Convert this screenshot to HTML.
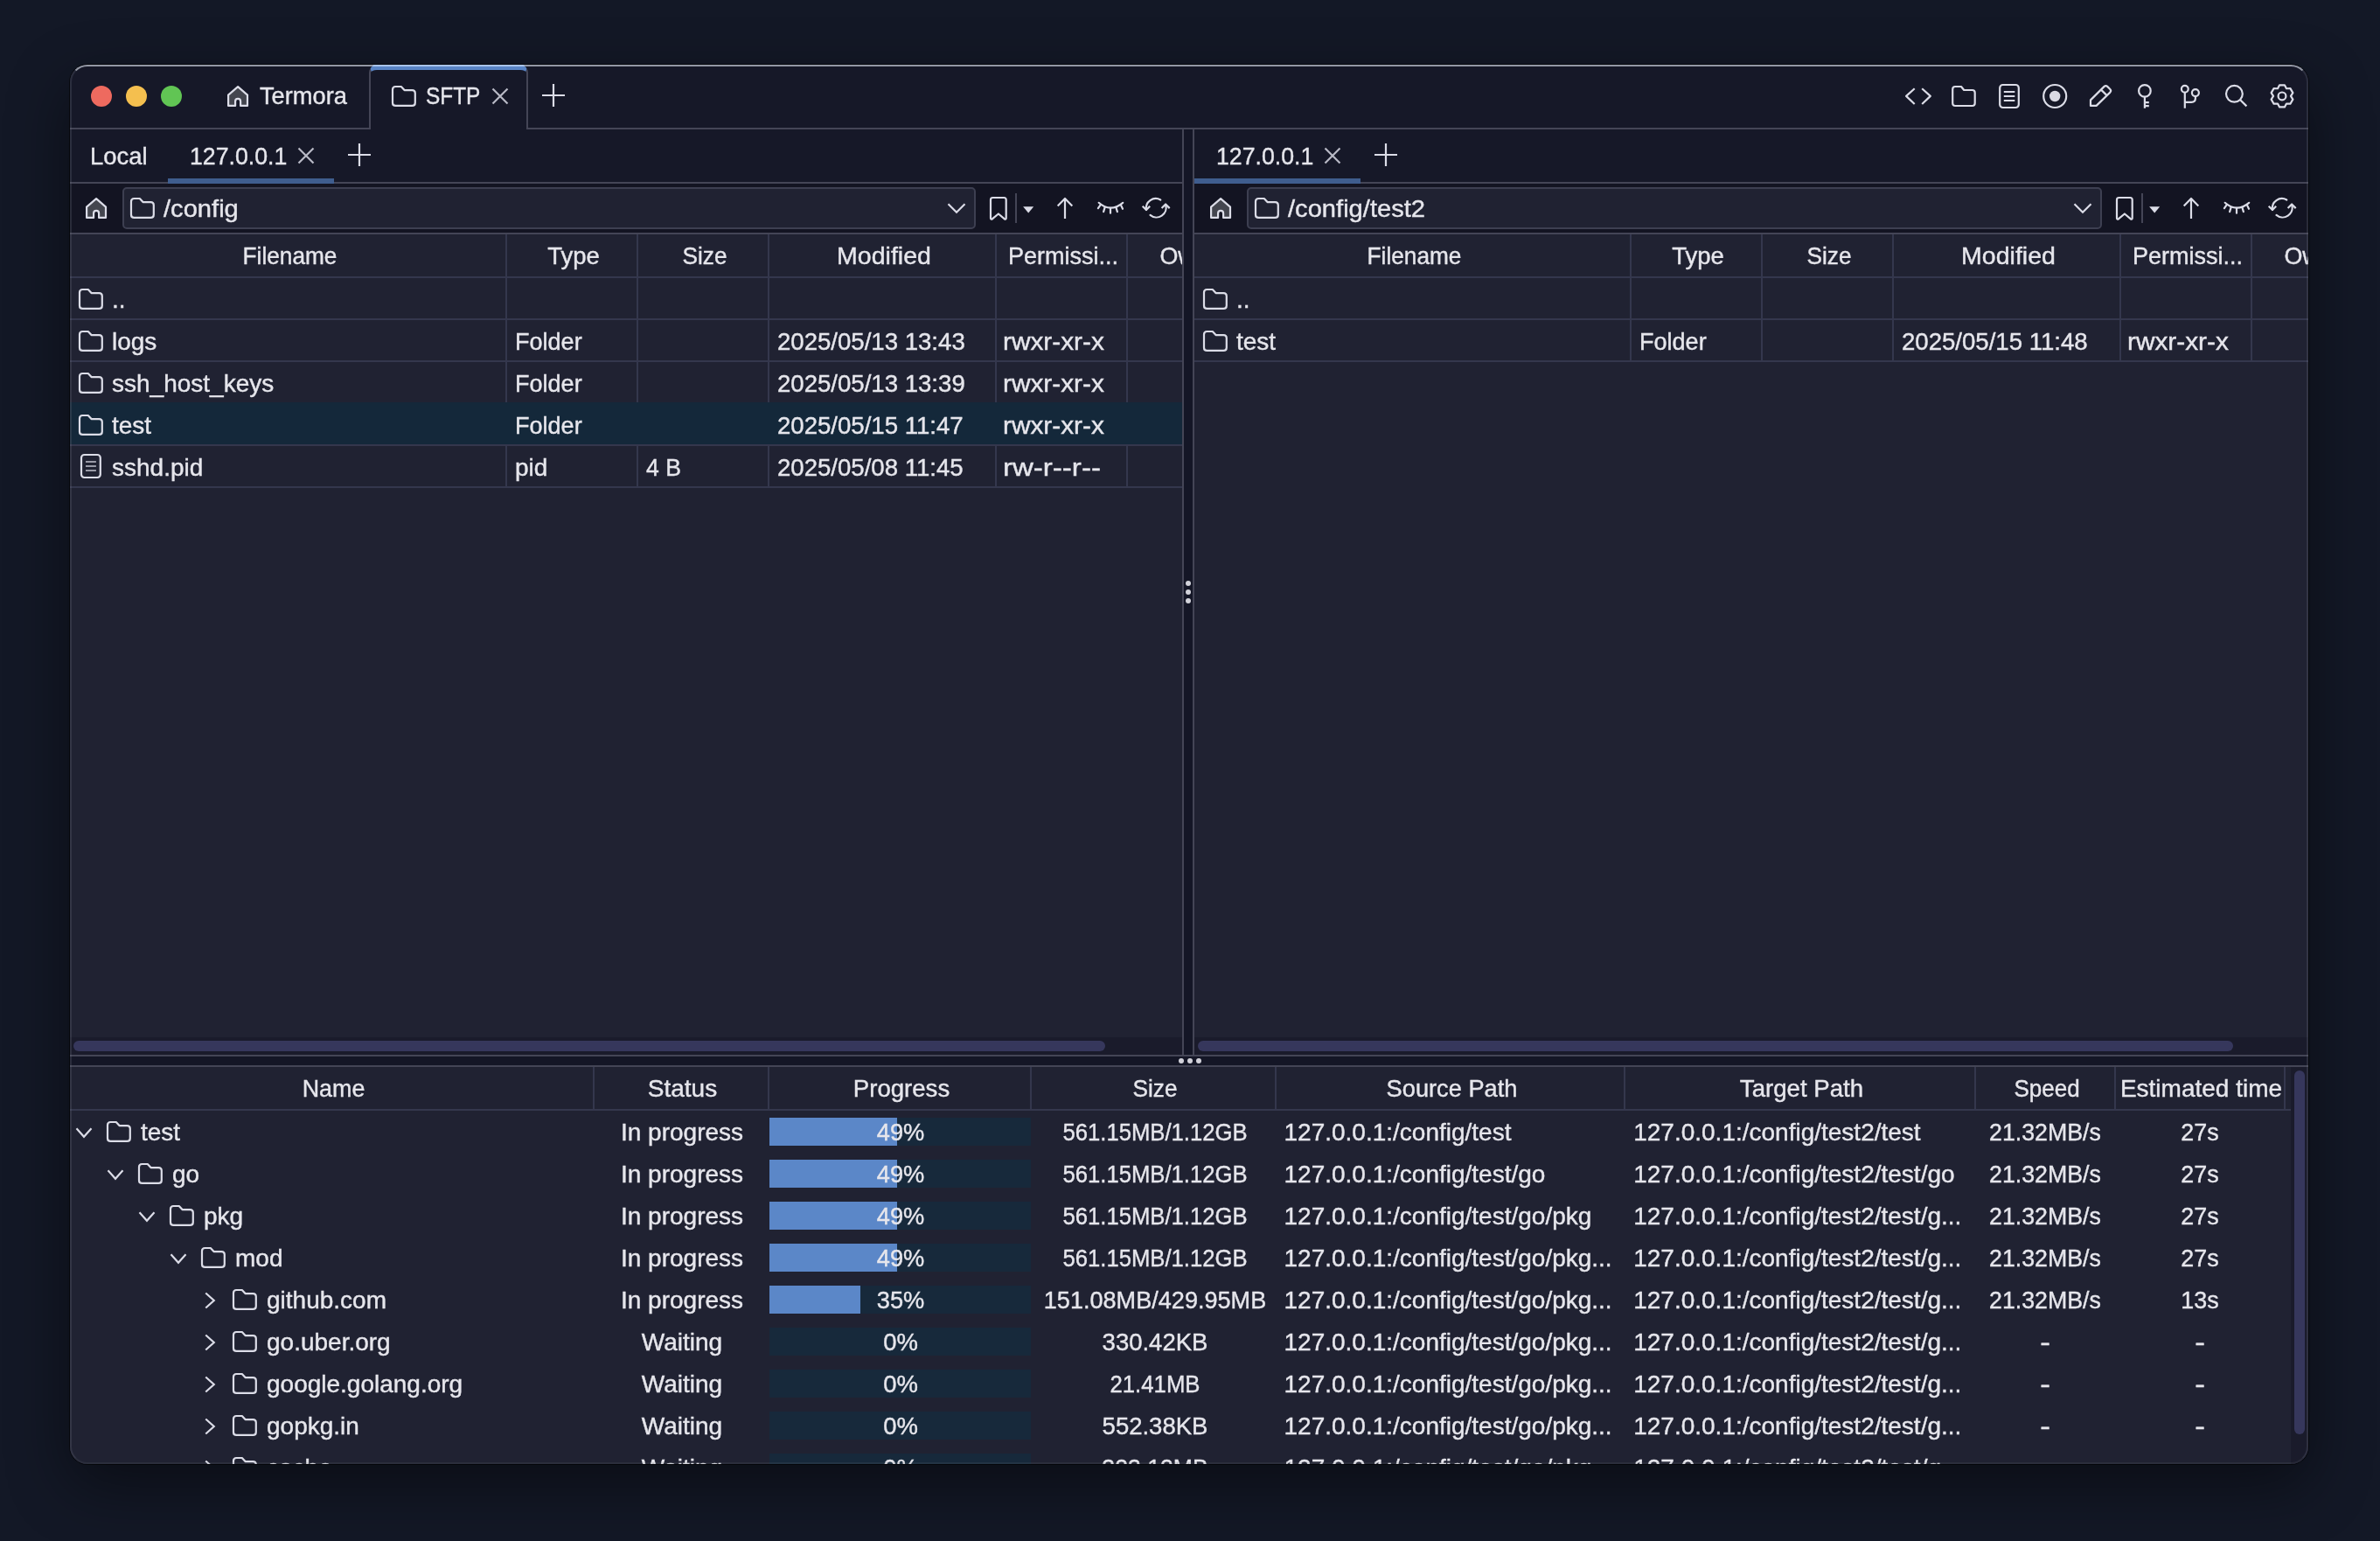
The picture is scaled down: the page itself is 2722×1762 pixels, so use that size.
<!DOCTYPE html><html><head><meta charset="utf-8"><style>
html,body{margin:0;padding:0;}
*{-webkit-font-smoothing:antialiased;}
div{-webkit-text-stroke:0.4px currentColor;}
body{width:2722px;height:1762px;overflow:hidden;background:#131826;font-family:"Liberation Sans", sans-serif;position:relative;}
</style></head><body>
<div style="position:absolute;left:80px;top:74px;width:2560px;height:1600px;border-radius:20px;background:#202232;overflow:hidden;box-shadow:0 0 0 1px rgba(0,0,0,0.6), 0 24px 70px rgba(0,0,0,0.45);">
</div>
<div style="position:absolute;left:80px;top:74px;width:2560px;height:1600px;border-radius:20px;overflow:hidden;will-change:transform;">
<div style="position:absolute;left:-80px;top:-74px;width:2722px;height:1762px;">
<div style="position:absolute;left:80px;top:74px;width:2560px;height:74px;background:#161828"></div>
<div style="position:absolute;left:80px;top:146px;width:2560px;height:2px;background:#444556"></div>
<div style="position:absolute;left:422px;top:74px;width:178px;height:68px;background:#161828;border-left:2px solid #444556;border-right:2px solid #444556;border-top:6px solid #5a85c6;border-radius:9px 9px 0 0;"></div>
<div style="position:absolute;left:104px;top:98px;width:24px;height:24px;border-radius:50%;background:#ee6a5f"></div>
<div style="position:absolute;left:144px;top:98px;width:24px;height:24px;border-radius:50%;background:#f4bf4f"></div>
<div style="position:absolute;left:184px;top:98px;width:24px;height:24px;border-radius:50%;background:#61c554"></div>
<svg style="position:absolute;left:252px;top:90px;" width="40" height="40" viewBox="0 0 40 40" fill="none" stroke="#dcdde8" stroke-width="2.2" stroke-linecap="round" stroke-linejoin="round"><path d="M9.1 30.9 V18.6 L20.1 9.1 L31 18.6 V30.9 H23.1 V25.9 A3 3 0 0 0 17.1 25.9 V30.9 Z" fill="#44464f"/></svg>
<div style="position:absolute;left:297px;top:90.30px;height:40px;line-height:40px;font-size:28px;color:#e6e6ec;white-space:nowrap;transform:scaleX(0.973);transform-origin:0 0;">Termora</div>
<svg style="position:absolute;left:446px;top:96px;" width="32" height="28" viewBox="0 0 32 28" fill="none" stroke="#dcdde8" stroke-width="2.2" stroke-linecap="round" stroke-linejoin="round"><path d="M3 6.5 Q3 3 6.5 3 H12.8 L16.5 7.1 H25.3 Q28.8 7.1 28.8 10.6 V21.4 Q28.8 24.9 25.3 24.9 H6.5 Q3 24.9 3 21.4 Z" stroke-width="2.2"/></svg>
<div style="position:absolute;left:487px;top:90.30px;height:40px;line-height:40px;font-size:28px;color:#e6e6ec;white-space:nowrap;transform:scaleX(0.871);transform-origin:0 0;">SFTP</div>
<svg style="position:absolute;left:560px;top:98px;" width="24" height="24" viewBox="0 0 24 24" fill="none" stroke="#dcdde8" stroke-width="2.2" stroke-linecap="round" stroke-linejoin="round"><path d="M3.5 3.5 L20.5 20.5 M20.5 3.5 L3.5 20.5" stroke="#b9bac6" stroke-width="2.2" stroke-linecap="butt"/></svg>
<svg style="position:absolute;left:618px;top:94px;" width="30" height="30" viewBox="0 0 30 30" fill="none" stroke="#dcdde8" stroke-width="2.2" stroke-linecap="round" stroke-linejoin="round"><path d="M2 15 H28 M15 2 V28" stroke-width="2.2" stroke-linecap="butt"/></svg>
<svg style="position:absolute;left:2170px;top:90px;" width="50" height="40" viewBox="0 0 50 40" fill="none" stroke="#dcdde8" stroke-width="2.2" stroke-linecap="round" stroke-linejoin="round"><path d="M19.7 11.3 L10.1 19.9 L19.7 29 M28.2 11.3 L37.8 19.9 L28.2 29" stroke-linecap="butt"/></svg>
<svg style="position:absolute;left:2220px;top:90px;" width="50" height="40" viewBox="0 0 50 40" fill="none" stroke="#dcdde8" stroke-width="2.2" stroke-linecap="round" stroke-linejoin="round"><path d="M13.2 12 Q13.2 9 16.2 9 H23 L26.2 13 H35.7 Q38.7 13 38.7 16 V28 Q38.7 31 35.7 31 H16.2 Q13.2 31 13.2 28 Z"/></svg>
<svg style="position:absolute;left:2275px;top:90px;" width="45" height="40" viewBox="0 0 45 40" fill="none" stroke="#dcdde8" stroke-width="2.2" stroke-linecap="round" stroke-linejoin="round"><rect x="12.2" y="7" width="21.6" height="26" rx="3.5"/><path d="M16.8 15 H29.3 M16.8 20 H29.3 M16.8 25 H29.3" stroke-linecap="butt"/></svg>
<svg style="position:absolute;left:2320px;top:90px;" width="60" height="40" viewBox="0 0 60 40" fill="none" stroke="#dcdde8" stroke-width="2.2" stroke-linecap="round" stroke-linejoin="round"><circle cx="30.2" cy="20" r="13"/><circle cx="30.2" cy="20" r="6.2" fill="#dadae4" stroke="none"/></svg>
<svg style="position:absolute;left:2380px;top:90px;" width="50" height="40" viewBox="0 0 50 40" fill="none" stroke="#dcdde8" stroke-width="2.2" stroke-linecap="round" stroke-linejoin="round"><path d="M11 30.9 V24.4 L26.6 8.9 Q28.4 7.2 30.2 8.9 L33.3 12 Q35 13.8 33.3 15.6 L17.6 30.9 Z M23 12.6 L28.9 18.4" stroke-linecap="butt"/></svg>
<svg style="position:absolute;left:2430px;top:90px;" width="45" height="40" viewBox="0 0 45 40" fill="none" stroke="#dcdde8" stroke-width="2.2" stroke-linecap="round" stroke-linejoin="round"><circle cx="22.9" cy="13.9" r="6.8"/><path d="M22.9 20.7 V33.7 M22.9 27.1 H27.8 M22.9 31.2 H27.8" stroke-linecap="butt"/></svg>
<svg style="position:absolute;left:2480px;top:90px;" width="45" height="40" viewBox="0 0 45 40" fill="none" stroke="#dcdde8" stroke-width="2.2" stroke-linecap="round" stroke-linejoin="round"><circle cx="18.8" cy="11.7" r="3.9"/><circle cx="30.9" cy="16.1" r="4"/><path d="M18.8 15.6 V33.7 M18.8 26.8 H26.3 Q30.9 26.8 30.9 22.2 V20.1" stroke-linecap="butt"/></svg>
<svg style="position:absolute;left:2530px;top:90px;" width="50" height="40" viewBox="0 0 50 40" fill="none" stroke="#dcdde8" stroke-width="2.2" stroke-linecap="round" stroke-linejoin="round"><circle cx="25.4" cy="17.3" r="9.4"/><path d="M32.2 24.2 L39.4 31.4" stroke-linecap="butt"/></svg>
<svg style="position:absolute;left:2590px;top:90px;" width="40" height="40" viewBox="0 0 40 40" fill="none" stroke="#dcdde8" stroke-width="2.2" stroke-linecap="round" stroke-linejoin="round"><path d="M25.00 11.24 L22.90 7.33 L17.10 7.33 L15.00 11.24 L10.57 11.10 L7.66 16.13 L10.00 19.90 L7.66 23.67 L10.57 28.70 L15.00 28.56 L17.10 32.47 L22.90 32.47 L25.00 28.56 L29.43 28.70 L32.34 23.67 L30.00 19.90 L32.34 16.13 L29.43 11.10 Z"/><circle cx="20" cy="19.9" r="4.4"/></svg>
<div style="position:absolute;left:80px;top:148px;width:1272px;height:1058px;overflow:hidden"><div style="position:absolute;left:-80px;top:-148px;width:2722px;height:1762px">
<div style="position:absolute;left:80px;top:148px;width:1272px;height:60px;background:#161828"></div>
<div style="position:absolute;left:80px;top:208px;width:1272px;height:2px;background:#444556"></div>
<div style="position:absolute;left:192px;top:204px;width:190px;height:6px;background:#3f5d8e"></div>
<div style="position:absolute;left:103px;top:158.80px;height:40px;line-height:40px;font-size:28px;color:#e6e6ec;white-space:nowrap;transform:scaleX(0.98);transform-origin:0 0;">Local</div>
<div style="position:absolute;left:217px;top:158.80px;height:40px;line-height:40px;font-size:28px;color:#e6e6ec;white-space:nowrap;transform:scaleX(0.953);transform-origin:0 0;">127.0.0.1</div>
<svg style="position:absolute;left:338px;top:166px;" width="24" height="24" viewBox="0 0 24 24" fill="none" stroke="#dcdde8" stroke-width="2.2" stroke-linecap="round" stroke-linejoin="round"><path d="M3.5 3.5 L20.5 20.5 M20.5 3.5 L3.5 20.5" stroke="#b9bac6" stroke-width="2.2" stroke-linecap="butt"/></svg>
<svg style="position:absolute;left:396px;top:162px;" width="30" height="30" viewBox="0 0 30 30" fill="none" stroke="#dcdde8" stroke-width="2.2" stroke-linecap="round" stroke-linejoin="round"><path d="M2 15 H28 M15 2 V28" stroke-width="2.2" stroke-linecap="butt"/></svg>
<div style="position:absolute;left:80px;top:210px;width:1272px;height:56px;background:#131422"></div>
<div style="position:absolute;left:80px;top:266px;width:1272px;height:2px;background:#444556"></div>
<svg style="position:absolute;left:89.5px;top:218px;" width="40" height="40" viewBox="0 0 40 40" fill="none" stroke="#dcdde8" stroke-width="2.2" stroke-linecap="round" stroke-linejoin="round"><path d="M9.1 30.9 V18.6 L20.1 9.1 L31 18.6 V30.9 H23.1 V25.9 A3 3 0 0 0 17.1 25.9 V30.9 Z" fill="#44464f"/></svg>
<div style="position:absolute;left:140px;top:214px;width:972px;height:44px;border:2px solid #3d3f51;border-radius:5px;background:#202232"></div>
<svg style="position:absolute;left:146.5px;top:224px;" width="32" height="28" viewBox="0 0 32 28" fill="none" stroke="#dcdde8" stroke-width="2.2" stroke-linecap="round" stroke-linejoin="round"><path d="M3 6.5 Q3 3 6.5 3 H12.8 L16.5 7.1 H25.3 Q28.8 7.1 28.8 10.6 V21.4 Q28.8 24.9 25.3 24.9 H6.5 Q3 24.9 3 21.4 Z" stroke-width="2.2"/></svg>
<div style="position:absolute;left:186.5px;top:218.60px;height:40px;line-height:40px;font-size:28px;color:#e6e6ec;white-space:nowrap;transform:scaleX(1.04);transform-origin:0 0;">/config</div>
<svg style="position:absolute;left:1082px;top:226px;" width="24" height="24" viewBox="0 0 24 24" fill="none" stroke="#dcdde8" stroke-width="2.2" stroke-linecap="round" stroke-linejoin="round"><path d="M2.5 7.25 L12 16.75 L21.5 7.25" stroke-width="2.2" stroke-linecap="butt" stroke-linejoin="miter"/></svg>
<svg style="position:absolute;left:1128px;top:222px;" width="28" height="32" viewBox="0 0 28 32" fill="none" stroke="#dcdde8" stroke-width="2.2" stroke-linecap="round" stroke-linejoin="round"><path d="M5 6.5 Q5 4 7.5 4 H20.2 Q22.7 4 22.7 6.5 V27.2 Q22.7 29.5 20.6 28.2 L13.9 22.5 L7.1 28.2 Q5 29.5 5 27.2 Z"/></svg>
<div style="position:absolute;left:1161px;top:221px;width:2px;height:34px;background:#444556"></div>
<svg style="position:absolute;left:1168px;top:234px;" width="16" height="12" viewBox="0 0 16 12" fill="none" stroke="#dcdde8" stroke-width="2.2" stroke-linecap="round" stroke-linejoin="round"><path d="M2.1 2.2 H14.2 L8.2 9.5 Z" fill="#dcdde8" stroke="none"/></svg>
<svg style="position:absolute;left:1205px;top:224px;" width="26" height="30" viewBox="0 0 26 30" fill="none" stroke="#dcdde8" stroke-width="2.2" stroke-linecap="round" stroke-linejoin="round"><path d="M13 3 V25.9 M4.7 11.5 L13 3 L21.3 11.5" stroke-linecap="butt"/></svg>
<svg style="position:absolute;left:1248px;top:222px;" width="44" height="28" viewBox="0 0 44 28" fill="none" stroke="#dcdde8" stroke-width="2.2" stroke-linecap="round" stroke-linejoin="round"><path d="M8.7 9.8 Q22 21.6 36.2 9.8" /><path d="M10.6 12.4 L7.9 16.2 M15.7 14.9 L14.1 20.1 M22 15.8 V21.7 M28.3 14.9 L29.9 20.1 M33.9 12.4 L36 16.8"/></svg>
<svg style="position:absolute;left:1302px;top:221px;" width="40" height="32" viewBox="0 0 40 32" fill="none" stroke="#dcdde8" stroke-width="2.2" stroke-linecap="round" stroke-linejoin="round"><path d="M25.3 7.5 A11 11 0 0 0 9 19" /><path d="M4.7 14.8 L9 19 L13.2 14.8" stroke-linecap="butt"/><path d="M13.5 24.9 A11 11 0 0 0 31.1 13.2"/><path d="M26.6 17.1 L31.1 12.5 L35.7 17.1" stroke-linecap="butt"/></svg>
<div style="position:absolute;left:86.50px;top:273.30px;width:489px;height:40px;line-height:40px;font-size:28px;color:#e6e6ec;white-space:nowrap;text-align:center;overflow:hidden;transform:scaleX(0.937);transform-origin:50% 0;">Filename</div>
<div style="position:absolute;left:585.50px;top:273.30px;width:140px;height:40px;line-height:40px;font-size:28px;color:#e6e6ec;white-space:nowrap;text-align:center;overflow:hidden;transform:scaleX(0.983);transform-origin:50% 0;">Type</div>
<div style="position:absolute;left:735.50px;top:273.30px;width:140px;height:40px;line-height:40px;font-size:28px;color:#e6e6ec;white-space:nowrap;text-align:center;overflow:hidden;transform:scaleX(0.936);transform-origin:50% 0;">Size</div>
<div style="position:absolute;left:885.50px;top:273.30px;width:250px;height:40px;line-height:40px;font-size:28px;color:#e6e6ec;white-space:nowrap;text-align:center;overflow:hidden;transform:scaleX(1.019);transform-origin:50% 0;">Modified</div>
<div style="position:absolute;left:1145.50px;top:273.30px;width:140px;height:40px;line-height:40px;font-size:28px;color:#e6e6ec;white-space:nowrap;text-align:center;overflow:hidden;transform:scaleX(0.965);transform-origin:50% 0;">Permissi...</div>
<div style="position:absolute;left:1295.50px;top:273.30px;width:140px;height:40px;line-height:40px;font-size:28px;color:#e6e6ec;white-space:nowrap;text-align:center;overflow:hidden;transform:scaleX(0.96);transform-origin:50% 0;">Owner</div>
<div style="position:absolute;left:80px;top:316px;width:1272px;height:2px;background:#34374d"></div>
<div style="position:absolute;left:80px;top:364px;width:1272px;height:2px;background:#34374d"></div>
<div style="position:absolute;left:80px;top:412px;width:1272px;height:2px;background:#34374d"></div>
<div style="position:absolute;left:80px;top:460px;width:1272px;height:2px;background:#34374d"></div>
<div style="position:absolute;left:80px;top:460px;width:1272px;height:50px;background:#14283a"></div>
<div style="position:absolute;left:80px;top:508px;width:1272px;height:2px;background:#34374d"></div>
<div style="position:absolute;left:80px;top:556px;width:1272px;height:2px;background:#34374d"></div>
<div style="position:absolute;left:578px;top:268px;width:2px;height:48px;background:#34374d"></div>
<div style="position:absolute;left:578px;top:318px;width:2px;height:46px;background:#34374d"></div>
<div style="position:absolute;left:578px;top:366px;width:2px;height:46px;background:#34374d"></div>
<div style="position:absolute;left:578px;top:414px;width:2px;height:46px;background:#34374d"></div>
<div style="position:absolute;left:578px;top:510px;width:2px;height:46px;background:#34374d"></div>
<div style="position:absolute;left:728px;top:268px;width:2px;height:48px;background:#34374d"></div>
<div style="position:absolute;left:728px;top:318px;width:2px;height:46px;background:#34374d"></div>
<div style="position:absolute;left:728px;top:366px;width:2px;height:46px;background:#34374d"></div>
<div style="position:absolute;left:728px;top:414px;width:2px;height:46px;background:#34374d"></div>
<div style="position:absolute;left:728px;top:510px;width:2px;height:46px;background:#34374d"></div>
<div style="position:absolute;left:878px;top:268px;width:2px;height:48px;background:#34374d"></div>
<div style="position:absolute;left:878px;top:318px;width:2px;height:46px;background:#34374d"></div>
<div style="position:absolute;left:878px;top:366px;width:2px;height:46px;background:#34374d"></div>
<div style="position:absolute;left:878px;top:414px;width:2px;height:46px;background:#34374d"></div>
<div style="position:absolute;left:878px;top:510px;width:2px;height:46px;background:#34374d"></div>
<div style="position:absolute;left:1138px;top:268px;width:2px;height:48px;background:#34374d"></div>
<div style="position:absolute;left:1138px;top:318px;width:2px;height:46px;background:#34374d"></div>
<div style="position:absolute;left:1138px;top:366px;width:2px;height:46px;background:#34374d"></div>
<div style="position:absolute;left:1138px;top:414px;width:2px;height:46px;background:#34374d"></div>
<div style="position:absolute;left:1138px;top:510px;width:2px;height:46px;background:#34374d"></div>
<div style="position:absolute;left:1288px;top:268px;width:2px;height:48px;background:#34374d"></div>
<div style="position:absolute;left:1288px;top:318px;width:2px;height:46px;background:#34374d"></div>
<div style="position:absolute;left:1288px;top:366px;width:2px;height:46px;background:#34374d"></div>
<div style="position:absolute;left:1288px;top:414px;width:2px;height:46px;background:#34374d"></div>
<div style="position:absolute;left:1288px;top:510px;width:2px;height:46px;background:#34374d"></div>
<svg style="position:absolute;left:88px;top:327.5px;" width="32" height="28" viewBox="0 0 32 28" fill="none" stroke="#dcdde8" stroke-width="2.2" stroke-linecap="round" stroke-linejoin="round"><path d="M3 6.5 Q3 3 6.5 3 H12.8 L16.5 7.1 H25.3 Q28.8 7.1 28.8 10.6 V21.4 Q28.8 24.9 25.3 24.9 H6.5 Q3 24.9 3 21.4 Z" stroke-width="2.2"/></svg>
<div style="position:absolute;left:128px;top:322.50px;height:40px;line-height:40px;font-size:28px;color:#e6e6ec;white-space:nowrap;">..</div>
<div style="position:absolute;left:589px;top:322.50px;height:40px;line-height:40px;font-size:28px;color:#e6e6ec;white-space:nowrap;"></div>
<div style="position:absolute;left:739px;top:322.50px;height:40px;line-height:40px;font-size:28px;color:#e6e6ec;white-space:nowrap;"></div>
<div style="position:absolute;left:889px;top:322.50px;height:40px;line-height:40px;font-size:28px;color:#e6e6ec;white-space:nowrap;"></div>
<div style="position:absolute;left:1147px;top:322.50px;height:40px;line-height:40px;font-size:28px;color:#e6e6ec;white-space:nowrap;"></div>
<svg style="position:absolute;left:88px;top:375.5px;" width="32" height="28" viewBox="0 0 32 28" fill="none" stroke="#dcdde8" stroke-width="2.2" stroke-linecap="round" stroke-linejoin="round"><path d="M3 6.5 Q3 3 6.5 3 H12.8 L16.5 7.1 H25.3 Q28.8 7.1 28.8 10.6 V21.4 Q28.8 24.9 25.3 24.9 H6.5 Q3 24.9 3 21.4 Z" stroke-width="2.2"/></svg>
<div style="position:absolute;left:128px;top:370.50px;height:40px;line-height:40px;font-size:28px;color:#e6e6ec;white-space:nowrap;">logs</div>
<div style="position:absolute;left:589px;top:370.50px;height:40px;line-height:40px;font-size:28px;color:#e6e6ec;white-space:nowrap;transform:scaleX(0.966);transform-origin:0 0;">Folder</div>
<div style="position:absolute;left:739px;top:370.50px;height:40px;line-height:40px;font-size:28px;color:#e6e6ec;white-space:nowrap;"></div>
<div style="position:absolute;left:889px;top:370.50px;height:40px;line-height:40px;font-size:28px;color:#e6e6ec;white-space:nowrap;transform:scaleX(0.985);transform-origin:0 0;">2025/05/13 13:43</div>
<div style="position:absolute;left:1147px;top:370.50px;height:40px;line-height:40px;font-size:28px;color:#e6e6ec;white-space:nowrap;transform:scaleX(1.064);transform-origin:0 0;">rwxr-xr-x</div>
<svg style="position:absolute;left:88px;top:423.5px;" width="32" height="28" viewBox="0 0 32 28" fill="none" stroke="#dcdde8" stroke-width="2.2" stroke-linecap="round" stroke-linejoin="round"><path d="M3 6.5 Q3 3 6.5 3 H12.8 L16.5 7.1 H25.3 Q28.8 7.1 28.8 10.6 V21.4 Q28.8 24.9 25.3 24.9 H6.5 Q3 24.9 3 21.4 Z" stroke-width="2.2"/></svg>
<div style="position:absolute;left:128px;top:418.50px;height:40px;line-height:40px;font-size:28px;color:#e6e6ec;white-space:nowrap;">ssh_host_keys</div>
<div style="position:absolute;left:589px;top:418.50px;height:40px;line-height:40px;font-size:28px;color:#e6e6ec;white-space:nowrap;transform:scaleX(0.966);transform-origin:0 0;">Folder</div>
<div style="position:absolute;left:739px;top:418.50px;height:40px;line-height:40px;font-size:28px;color:#e6e6ec;white-space:nowrap;"></div>
<div style="position:absolute;left:889px;top:418.50px;height:40px;line-height:40px;font-size:28px;color:#e6e6ec;white-space:nowrap;transform:scaleX(0.985);transform-origin:0 0;">2025/05/13 13:39</div>
<div style="position:absolute;left:1147px;top:418.50px;height:40px;line-height:40px;font-size:28px;color:#e6e6ec;white-space:nowrap;transform:scaleX(1.064);transform-origin:0 0;">rwxr-xr-x</div>
<svg style="position:absolute;left:88px;top:471.5px;" width="32" height="28" viewBox="0 0 32 28" fill="none" stroke="#dcdde8" stroke-width="2.2" stroke-linecap="round" stroke-linejoin="round"><path d="M3 6.5 Q3 3 6.5 3 H12.8 L16.5 7.1 H25.3 Q28.8 7.1 28.8 10.6 V21.4 Q28.8 24.9 25.3 24.9 H6.5 Q3 24.9 3 21.4 Z" stroke-width="2.2"/></svg>
<div style="position:absolute;left:128px;top:466.50px;height:40px;line-height:40px;font-size:28px;color:#e6e6ec;white-space:nowrap;">test</div>
<div style="position:absolute;left:589px;top:466.50px;height:40px;line-height:40px;font-size:28px;color:#e6e6ec;white-space:nowrap;transform:scaleX(0.966);transform-origin:0 0;">Folder</div>
<div style="position:absolute;left:739px;top:466.50px;height:40px;line-height:40px;font-size:28px;color:#e6e6ec;white-space:nowrap;"></div>
<div style="position:absolute;left:889px;top:466.50px;height:40px;line-height:40px;font-size:28px;color:#e6e6ec;white-space:nowrap;transform:scaleX(0.985);transform-origin:0 0;">2025/05/15 11:47</div>
<div style="position:absolute;left:1147px;top:466.50px;height:40px;line-height:40px;font-size:28px;color:#e6e6ec;white-space:nowrap;transform:scaleX(1.064);transform-origin:0 0;">rwxr-xr-x</div>
<svg style="position:absolute;left:91.1px;top:518px;" width="26" height="30" viewBox="0 0 26 30" fill="none" stroke="#dcdde8" stroke-width="2.2" stroke-linecap="round" stroke-linejoin="round"><rect x="2" y="2" width="21.8" height="26" rx="3.5"/><path d="M7 10 H18.9 M7 15 H18.9 M7 20 H18.9" stroke="#9a9ba8" stroke-linecap="butt"/></svg>
<div style="position:absolute;left:128px;top:514.50px;height:40px;line-height:40px;font-size:28px;color:#e6e6ec;white-space:nowrap;">sshd.pid</div>
<div style="position:absolute;left:589px;top:514.50px;height:40px;line-height:40px;font-size:28px;color:#e6e6ec;white-space:nowrap;">pid</div>
<div style="position:absolute;left:739px;top:514.50px;height:40px;line-height:40px;font-size:28px;color:#e6e6ec;white-space:nowrap;transform:scaleX(0.95);transform-origin:0 0;">4 B</div>
<div style="position:absolute;left:889px;top:514.50px;height:40px;line-height:40px;font-size:28px;color:#e6e6ec;white-space:nowrap;transform:scaleX(0.985);transform-origin:0 0;">2025/05/08 11:45</div>
<div style="position:absolute;left:1147px;top:514.50px;height:40px;line-height:40px;font-size:28px;color:#e6e6ec;white-space:nowrap;transform:scaleX(1.18);transform-origin:0 0;">rw-r--r--</div>
<div style="position:absolute;left:80px;top:1186px;width:1272px;height:20px;background:#1a1b2b"></div>
<div style="position:absolute;left:84px;top:1190px;width:1180px;height:12px;border-radius:6px;background:#36375c"></div>
</div></div>
<div style="position:absolute;left:1365px;top:148px;width:1275px;height:1058px;overflow:hidden"><div style="position:absolute;left:-1365px;top:-148px;width:2722px;height:1762px">
<div style="position:absolute;left:1365px;top:148px;width:1275px;height:60px;background:#161828"></div>
<div style="position:absolute;left:1365px;top:208px;width:1275px;height:2px;background:#444556"></div>
<div style="position:absolute;left:1366px;top:204px;width:190px;height:6px;background:#3f5d8e"></div>
<div style="position:absolute;left:1391px;top:158.80px;height:40px;line-height:40px;font-size:28px;color:#e6e6ec;white-space:nowrap;transform:scaleX(0.953);transform-origin:0 0;">127.0.0.1</div>
<svg style="position:absolute;left:1512px;top:166px;" width="24" height="24" viewBox="0 0 24 24" fill="none" stroke="#dcdde8" stroke-width="2.2" stroke-linecap="round" stroke-linejoin="round"><path d="M3.5 3.5 L20.5 20.5 M20.5 3.5 L3.5 20.5" stroke="#b9bac6" stroke-width="2.2" stroke-linecap="butt"/></svg>
<svg style="position:absolute;left:1570px;top:162px;" width="30" height="30" viewBox="0 0 30 30" fill="none" stroke="#dcdde8" stroke-width="2.2" stroke-linecap="round" stroke-linejoin="round"><path d="M2 15 H28 M15 2 V28" stroke-width="2.2" stroke-linecap="butt"/></svg>
<div style="position:absolute;left:1365px;top:210px;width:1275px;height:56px;background:#131422"></div>
<div style="position:absolute;left:1365px;top:266px;width:1275px;height:2px;background:#444556"></div>
<svg style="position:absolute;left:1375.5px;top:218px;" width="40" height="40" viewBox="0 0 40 40" fill="none" stroke="#dcdde8" stroke-width="2.2" stroke-linecap="round" stroke-linejoin="round"><path d="M9.1 30.9 V18.6 L20.1 9.1 L31 18.6 V30.9 H23.1 V25.9 A3 3 0 0 0 17.1 25.9 V30.9 Z" fill="#44464f"/></svg>
<div style="position:absolute;left:1426px;top:214px;width:974px;height:44px;border:2px solid #3d3f51;border-radius:5px;background:#202232"></div>
<svg style="position:absolute;left:1432.5px;top:224px;" width="32" height="28" viewBox="0 0 32 28" fill="none" stroke="#dcdde8" stroke-width="2.2" stroke-linecap="round" stroke-linejoin="round"><path d="M3 6.5 Q3 3 6.5 3 H12.8 L16.5 7.1 H25.3 Q28.8 7.1 28.8 10.6 V21.4 Q28.8 24.9 25.3 24.9 H6.5 Q3 24.9 3 21.4 Z" stroke-width="2.2"/></svg>
<div style="position:absolute;left:1472.5px;top:218.60px;height:40px;line-height:40px;font-size:28px;color:#e6e6ec;white-space:nowrap;transform:scaleX(1.04);transform-origin:0 0;">/config/test2</div>
<svg style="position:absolute;left:2370px;top:226px;" width="24" height="24" viewBox="0 0 24 24" fill="none" stroke="#dcdde8" stroke-width="2.2" stroke-linecap="round" stroke-linejoin="round"><path d="M2.5 7.25 L12 16.75 L21.5 7.25" stroke-width="2.2" stroke-linecap="butt" stroke-linejoin="miter"/></svg>
<svg style="position:absolute;left:2416px;top:222px;" width="28" height="32" viewBox="0 0 28 32" fill="none" stroke="#dcdde8" stroke-width="2.2" stroke-linecap="round" stroke-linejoin="round"><path d="M5 6.5 Q5 4 7.5 4 H20.2 Q22.7 4 22.7 6.5 V27.2 Q22.7 29.5 20.6 28.2 L13.9 22.5 L7.1 28.2 Q5 29.5 5 27.2 Z"/></svg>
<div style="position:absolute;left:2449px;top:221px;width:2px;height:34px;background:#444556"></div>
<svg style="position:absolute;left:2456px;top:234px;" width="16" height="12" viewBox="0 0 16 12" fill="none" stroke="#dcdde8" stroke-width="2.2" stroke-linecap="round" stroke-linejoin="round"><path d="M2.1 2.2 H14.2 L8.2 9.5 Z" fill="#dcdde8" stroke="none"/></svg>
<svg style="position:absolute;left:2493px;top:224px;" width="26" height="30" viewBox="0 0 26 30" fill="none" stroke="#dcdde8" stroke-width="2.2" stroke-linecap="round" stroke-linejoin="round"><path d="M13 3 V25.9 M4.7 11.5 L13 3 L21.3 11.5" stroke-linecap="butt"/></svg>
<svg style="position:absolute;left:2536px;top:222px;" width="44" height="28" viewBox="0 0 44 28" fill="none" stroke="#dcdde8" stroke-width="2.2" stroke-linecap="round" stroke-linejoin="round"><path d="M8.7 9.8 Q22 21.6 36.2 9.8" /><path d="M10.6 12.4 L7.9 16.2 M15.7 14.9 L14.1 20.1 M22 15.8 V21.7 M28.3 14.9 L29.9 20.1 M33.9 12.4 L36 16.8"/></svg>
<svg style="position:absolute;left:2590px;top:221px;" width="40" height="32" viewBox="0 0 40 32" fill="none" stroke="#dcdde8" stroke-width="2.2" stroke-linecap="round" stroke-linejoin="round"><path d="M25.3 7.5 A11 11 0 0 0 9 19" /><path d="M4.7 14.8 L9 19 L13.2 14.8" stroke-linecap="butt"/><path d="M13.5 24.9 A11 11 0 0 0 31.1 13.2"/><path d="M26.6 17.1 L31.1 12.5 L35.7 17.1" stroke-linecap="butt"/></svg>
<div style="position:absolute;left:1372.50px;top:273.30px;width:489px;height:40px;line-height:40px;font-size:28px;color:#e6e6ec;white-space:nowrap;text-align:center;overflow:hidden;transform:scaleX(0.937);transform-origin:50% 0;">Filename</div>
<div style="position:absolute;left:1871.50px;top:273.30px;width:140px;height:40px;line-height:40px;font-size:28px;color:#e6e6ec;white-space:nowrap;text-align:center;overflow:hidden;transform:scaleX(0.983);transform-origin:50% 0;">Type</div>
<div style="position:absolute;left:2021.50px;top:273.30px;width:140px;height:40px;line-height:40px;font-size:28px;color:#e6e6ec;white-space:nowrap;text-align:center;overflow:hidden;transform:scaleX(0.936);transform-origin:50% 0;">Size</div>
<div style="position:absolute;left:2171.50px;top:273.30px;width:250px;height:40px;line-height:40px;font-size:28px;color:#e6e6ec;white-space:nowrap;text-align:center;overflow:hidden;transform:scaleX(1.019);transform-origin:50% 0;">Modified</div>
<div style="position:absolute;left:2431.50px;top:273.30px;width:140px;height:40px;line-height:40px;font-size:28px;color:#e6e6ec;white-space:nowrap;text-align:center;overflow:hidden;transform:scaleX(0.965);transform-origin:50% 0;">Permissi...</div>
<div style="position:absolute;left:2581.50px;top:273.30px;width:140px;height:40px;line-height:40px;font-size:28px;color:#e6e6ec;white-space:nowrap;text-align:center;overflow:hidden;transform:scaleX(0.96);transform-origin:50% 0;">Owner</div>
<div style="position:absolute;left:1365px;top:316px;width:1275px;height:2px;background:#34374d"></div>
<div style="position:absolute;left:1365px;top:364px;width:1275px;height:2px;background:#34374d"></div>
<div style="position:absolute;left:1365px;top:412px;width:1275px;height:2px;background:#34374d"></div>
<div style="position:absolute;left:1864px;top:268px;width:2px;height:48px;background:#34374d"></div>
<div style="position:absolute;left:1864px;top:318px;width:2px;height:46px;background:#34374d"></div>
<div style="position:absolute;left:1864px;top:366px;width:2px;height:46px;background:#34374d"></div>
<div style="position:absolute;left:2014px;top:268px;width:2px;height:48px;background:#34374d"></div>
<div style="position:absolute;left:2014px;top:318px;width:2px;height:46px;background:#34374d"></div>
<div style="position:absolute;left:2014px;top:366px;width:2px;height:46px;background:#34374d"></div>
<div style="position:absolute;left:2164px;top:268px;width:2px;height:48px;background:#34374d"></div>
<div style="position:absolute;left:2164px;top:318px;width:2px;height:46px;background:#34374d"></div>
<div style="position:absolute;left:2164px;top:366px;width:2px;height:46px;background:#34374d"></div>
<div style="position:absolute;left:2424px;top:268px;width:2px;height:48px;background:#34374d"></div>
<div style="position:absolute;left:2424px;top:318px;width:2px;height:46px;background:#34374d"></div>
<div style="position:absolute;left:2424px;top:366px;width:2px;height:46px;background:#34374d"></div>
<div style="position:absolute;left:2574px;top:268px;width:2px;height:48px;background:#34374d"></div>
<div style="position:absolute;left:2574px;top:318px;width:2px;height:46px;background:#34374d"></div>
<div style="position:absolute;left:2574px;top:366px;width:2px;height:46px;background:#34374d"></div>
<svg style="position:absolute;left:1374px;top:327.5px;" width="32" height="28" viewBox="0 0 32 28" fill="none" stroke="#dcdde8" stroke-width="2.2" stroke-linecap="round" stroke-linejoin="round"><path d="M3 6.5 Q3 3 6.5 3 H12.8 L16.5 7.1 H25.3 Q28.8 7.1 28.8 10.6 V21.4 Q28.8 24.9 25.3 24.9 H6.5 Q3 24.9 3 21.4 Z" stroke-width="2.2"/></svg>
<div style="position:absolute;left:1414px;top:322.50px;height:40px;line-height:40px;font-size:28px;color:#e6e6ec;white-space:nowrap;">..</div>
<div style="position:absolute;left:1875px;top:322.50px;height:40px;line-height:40px;font-size:28px;color:#e6e6ec;white-space:nowrap;"></div>
<div style="position:absolute;left:2025px;top:322.50px;height:40px;line-height:40px;font-size:28px;color:#e6e6ec;white-space:nowrap;"></div>
<div style="position:absolute;left:2175px;top:322.50px;height:40px;line-height:40px;font-size:28px;color:#e6e6ec;white-space:nowrap;"></div>
<div style="position:absolute;left:2433px;top:322.50px;height:40px;line-height:40px;font-size:28px;color:#e6e6ec;white-space:nowrap;"></div>
<svg style="position:absolute;left:1374px;top:375.5px;" width="32" height="28" viewBox="0 0 32 28" fill="none" stroke="#dcdde8" stroke-width="2.2" stroke-linecap="round" stroke-linejoin="round"><path d="M3 6.5 Q3 3 6.5 3 H12.8 L16.5 7.1 H25.3 Q28.8 7.1 28.8 10.6 V21.4 Q28.8 24.9 25.3 24.9 H6.5 Q3 24.9 3 21.4 Z" stroke-width="2.2"/></svg>
<div style="position:absolute;left:1414px;top:370.50px;height:40px;line-height:40px;font-size:28px;color:#e6e6ec;white-space:nowrap;">test</div>
<div style="position:absolute;left:1875px;top:370.50px;height:40px;line-height:40px;font-size:28px;color:#e6e6ec;white-space:nowrap;transform:scaleX(0.966);transform-origin:0 0;">Folder</div>
<div style="position:absolute;left:2025px;top:370.50px;height:40px;line-height:40px;font-size:28px;color:#e6e6ec;white-space:nowrap;"></div>
<div style="position:absolute;left:2175px;top:370.50px;height:40px;line-height:40px;font-size:28px;color:#e6e6ec;white-space:nowrap;transform:scaleX(0.985);transform-origin:0 0;">2025/05/15 11:48</div>
<div style="position:absolute;left:2433px;top:370.50px;height:40px;line-height:40px;font-size:28px;color:#e6e6ec;white-space:nowrap;transform:scaleX(1.064);transform-origin:0 0;">rwxr-xr-x</div>
<div style="position:absolute;left:1365px;top:1186px;width:1275px;height:20px;background:#1a1b2b"></div>
<div style="position:absolute;left:1370px;top:1190px;width:1184px;height:12px;border-radius:6px;background:#36375c"></div>
</div></div>
<div style="position:absolute;left:1352px;top:148px;width:13px;height:1058px;background:#141626"></div>
<div style="position:absolute;left:1352px;top:148px;width:2px;height:1058px;background:#444556"></div>
<div style="position:absolute;left:1364px;top:148px;width:2px;height:1058px;background:#444556"></div>
<div style="position:absolute;left:1356px;top:664px;width:6px;height:6px;border-radius:50%;background:#d2d2da"></div>
<div style="position:absolute;left:1356px;top:674px;width:6px;height:6px;border-radius:50%;background:#d2d2da"></div>
<div style="position:absolute;left:1356px;top:684px;width:6px;height:6px;border-radius:50%;background:#d2d2da"></div>
<div style="position:absolute;left:80px;top:1206px;width:2560px;height:14px;background:#141626"></div>
<div style="position:absolute;left:80px;top:1206px;width:2560px;height:2px;background:#444556"></div>
<div style="position:absolute;left:80px;top:1218px;width:2560px;height:2px;background:#444556"></div>
<div style="position:absolute;left:1348px;top:1210px;width:6px;height:6px;border-radius:50%;background:#d2d2da"></div>
<div style="position:absolute;left:1358px;top:1210px;width:6px;height:6px;border-radius:50%;background:#d2d2da"></div>
<div style="position:absolute;left:1368px;top:1210px;width:6px;height:6px;border-radius:50%;background:#d2d2da"></div>
<div style="position:absolute;left:80px;top:1220px;width:2560px;height:454px;background:#202232"></div>
<div style="position:absolute;left:83.50px;top:1225.30px;width:595px;height:40px;line-height:40px;font-size:28px;color:#e6e6ec;white-space:nowrap;text-align:center;overflow:hidden;transform:scaleX(0.96);transform-origin:50% 0;">Name</div>
<div style="position:absolute;left:682.50px;top:1225.30px;width:196px;height:40px;line-height:40px;font-size:28px;color:#e6e6ec;white-space:nowrap;text-align:center;overflow:hidden;">Status</div>
<div style="position:absolute;left:882.50px;top:1225.30px;width:296px;height:40px;line-height:40px;font-size:28px;color:#e6e6ec;white-space:nowrap;text-align:center;overflow:hidden;transform:scaleX(0.985);transform-origin:50% 0;">Progress</div>
<div style="position:absolute;left:1182.50px;top:1225.30px;width:276px;height:40px;line-height:40px;font-size:28px;color:#e6e6ec;white-space:nowrap;text-align:center;overflow:hidden;transform:scaleX(0.936);transform-origin:50% 0;">Size</div>
<div style="position:absolute;left:1462.50px;top:1225.30px;width:395px;height:40px;line-height:40px;font-size:28px;color:#e6e6ec;white-space:nowrap;text-align:center;overflow:hidden;transform:scaleX(0.972);transform-origin:50% 0;">Source Path</div>
<div style="position:absolute;left:1861.50px;top:1225.30px;width:397px;height:40px;line-height:40px;font-size:28px;color:#e6e6ec;white-space:nowrap;text-align:center;overflow:hidden;transform:scaleX(0.987);transform-origin:50% 0;">Target Path</div>
<div style="position:absolute;left:2262.50px;top:1225.30px;width:156px;height:40px;line-height:40px;font-size:28px;color:#e6e6ec;white-space:nowrap;text-align:center;overflow:hidden;transform:scaleX(0.929);transform-origin:50% 0;">Speed</div>
<div style="position:absolute;left:2422.50px;top:1225.30px;width:190px;height:40px;line-height:40px;font-size:28px;color:#e6e6ec;white-space:nowrap;text-align:center;overflow:hidden;">Estimated time</div>
<div style="position:absolute;left:678px;top:1220px;width:2px;height:48px;background:#34374d"></div>
<div style="position:absolute;left:878px;top:1220px;width:2px;height:48px;background:#34374d"></div>
<div style="position:absolute;left:1178px;top:1220px;width:2px;height:48px;background:#34374d"></div>
<div style="position:absolute;left:1458px;top:1220px;width:2px;height:48px;background:#34374d"></div>
<div style="position:absolute;left:1857px;top:1220px;width:2px;height:48px;background:#34374d"></div>
<div style="position:absolute;left:2258px;top:1220px;width:2px;height:48px;background:#34374d"></div>
<div style="position:absolute;left:2418px;top:1220px;width:2px;height:48px;background:#34374d"></div>
<div style="position:absolute;left:2612px;top:1220px;width:2px;height:48px;background:#34374d"></div>
<div style="position:absolute;left:80px;top:1268px;width:2540px;height:2px;background:#34374d"></div>
<div style="position:absolute;left:2620px;top:1220px;width:20px;height:454px;background:#1a1b2b"></div>
<svg style="position:absolute;left:83.5px;top:1283.4px;" width="24" height="24" viewBox="0 0 24 24" fill="none" stroke="#dcdde8" stroke-width="2.2" stroke-linecap="round" stroke-linejoin="round"><path d="M3.5 7.25 L12 16.75 L20.5 7.25" stroke-width="2.2" stroke-linecap="butt" stroke-linejoin="miter"/></svg>
<svg style="position:absolute;left:120.2px;top:1280.1px;" width="32" height="28" viewBox="0 0 32 28" fill="none" stroke="#dcdde8" stroke-width="2.2" stroke-linecap="round" stroke-linejoin="round"><path d="M3 6.5 Q3 3 6.5 3 H12.8 L16.5 7.1 H25.3 Q28.8 7.1 28.8 10.6 V21.4 Q28.8 24.9 25.3 24.9 H6.5 Q3 24.9 3 21.4 Z" stroke-width="2.2"/></svg>
<div style="position:absolute;left:161px;top:1274.50px;height:40px;line-height:40px;font-size:28px;color:#e6e6ec;white-space:nowrap;">test</div>
<div style="position:absolute;left:682.00px;top:1274.50px;width:196px;height:40px;line-height:40px;font-size:28px;color:#e6e6ec;white-space:nowrap;text-align:center;overflow:hidden;">In progress</div>
<div style="position:absolute;left:880px;top:1278px;width:299px;height:32px;background:#17293b"></div>
<div style="position:absolute;left:880px;top:1278px;width:146px;height:32px;background:#5b87c8"></div>
<div style="position:absolute;left:929.50px;top:1274.50px;width:200px;height:40px;line-height:40px;font-size:28px;color:#e6e6ec;white-space:nowrap;text-align:center;overflow:hidden;transform:scaleX(0.973);transform-origin:50% 0;">49%</div>
<div style="position:absolute;left:1182.00px;top:1274.50px;width:278px;height:40px;line-height:40px;font-size:28px;color:#e6e6ec;white-space:nowrap;text-align:center;overflow:hidden;transform:scaleX(0.916);transform-origin:50% 0;">561.15MB/1.12GB</div>
<div style="position:absolute;left:1468.5px;top:1274.50px;height:40px;line-height:40px;font-size:28px;color:#e6e6ec;white-space:nowrap;">127.0.0.1:/config/test</div>
<div style="position:absolute;left:1868.2px;top:1274.50px;height:40px;line-height:40px;font-size:28px;color:#e6e6ec;white-space:nowrap;">127.0.0.1:/config/test2/test</div>
<div style="position:absolute;left:2260.00px;top:1274.50px;width:158px;height:40px;line-height:40px;font-size:28px;color:#e6e6ec;white-space:nowrap;text-align:center;overflow:hidden;transform:scaleX(0.955);transform-origin:50% 0;">21.32MB/s</div>
<div style="position:absolute;left:2420.00px;top:1274.50px;width:192px;height:40px;line-height:40px;font-size:28px;color:#e6e6ec;white-space:nowrap;text-align:center;overflow:hidden;transform:scaleX(0.959);transform-origin:50% 0;">27s</div>
<svg style="position:absolute;left:119.5px;top:1331.4px;" width="24" height="24" viewBox="0 0 24 24" fill="none" stroke="#dcdde8" stroke-width="2.2" stroke-linecap="round" stroke-linejoin="round"><path d="M3.5 7.25 L12 16.75 L20.5 7.25" stroke-width="2.2" stroke-linecap="butt" stroke-linejoin="miter"/></svg>
<svg style="position:absolute;left:156.2px;top:1328.1px;" width="32" height="28" viewBox="0 0 32 28" fill="none" stroke="#dcdde8" stroke-width="2.2" stroke-linecap="round" stroke-linejoin="round"><path d="M3 6.5 Q3 3 6.5 3 H12.8 L16.5 7.1 H25.3 Q28.8 7.1 28.8 10.6 V21.4 Q28.8 24.9 25.3 24.9 H6.5 Q3 24.9 3 21.4 Z" stroke-width="2.2"/></svg>
<div style="position:absolute;left:197px;top:1322.50px;height:40px;line-height:40px;font-size:28px;color:#e6e6ec;white-space:nowrap;">go</div>
<div style="position:absolute;left:682.00px;top:1322.50px;width:196px;height:40px;line-height:40px;font-size:28px;color:#e6e6ec;white-space:nowrap;text-align:center;overflow:hidden;">In progress</div>
<div style="position:absolute;left:880px;top:1326px;width:299px;height:32px;background:#17293b"></div>
<div style="position:absolute;left:880px;top:1326px;width:146px;height:32px;background:#5b87c8"></div>
<div style="position:absolute;left:929.50px;top:1322.50px;width:200px;height:40px;line-height:40px;font-size:28px;color:#e6e6ec;white-space:nowrap;text-align:center;overflow:hidden;transform:scaleX(0.973);transform-origin:50% 0;">49%</div>
<div style="position:absolute;left:1182.00px;top:1322.50px;width:278px;height:40px;line-height:40px;font-size:28px;color:#e6e6ec;white-space:nowrap;text-align:center;overflow:hidden;transform:scaleX(0.916);transform-origin:50% 0;">561.15MB/1.12GB</div>
<div style="position:absolute;left:1468.5px;top:1322.50px;height:40px;line-height:40px;font-size:28px;color:#e6e6ec;white-space:nowrap;">127.0.0.1:/config/test/go</div>
<div style="position:absolute;left:1868.2px;top:1322.50px;height:40px;line-height:40px;font-size:28px;color:#e6e6ec;white-space:nowrap;">127.0.0.1:/config/test2/test/go</div>
<div style="position:absolute;left:2260.00px;top:1322.50px;width:158px;height:40px;line-height:40px;font-size:28px;color:#e6e6ec;white-space:nowrap;text-align:center;overflow:hidden;transform:scaleX(0.955);transform-origin:50% 0;">21.32MB/s</div>
<div style="position:absolute;left:2420.00px;top:1322.50px;width:192px;height:40px;line-height:40px;font-size:28px;color:#e6e6ec;white-space:nowrap;text-align:center;overflow:hidden;transform:scaleX(0.959);transform-origin:50% 0;">27s</div>
<svg style="position:absolute;left:155.5px;top:1379.4px;" width="24" height="24" viewBox="0 0 24 24" fill="none" stroke="#dcdde8" stroke-width="2.2" stroke-linecap="round" stroke-linejoin="round"><path d="M3.5 7.25 L12 16.75 L20.5 7.25" stroke-width="2.2" stroke-linecap="butt" stroke-linejoin="miter"/></svg>
<svg style="position:absolute;left:192.2px;top:1376.1px;" width="32" height="28" viewBox="0 0 32 28" fill="none" stroke="#dcdde8" stroke-width="2.2" stroke-linecap="round" stroke-linejoin="round"><path d="M3 6.5 Q3 3 6.5 3 H12.8 L16.5 7.1 H25.3 Q28.8 7.1 28.8 10.6 V21.4 Q28.8 24.9 25.3 24.9 H6.5 Q3 24.9 3 21.4 Z" stroke-width="2.2"/></svg>
<div style="position:absolute;left:233px;top:1370.50px;height:40px;line-height:40px;font-size:28px;color:#e6e6ec;white-space:nowrap;">pkg</div>
<div style="position:absolute;left:682.00px;top:1370.50px;width:196px;height:40px;line-height:40px;font-size:28px;color:#e6e6ec;white-space:nowrap;text-align:center;overflow:hidden;">In progress</div>
<div style="position:absolute;left:880px;top:1374px;width:299px;height:32px;background:#17293b"></div>
<div style="position:absolute;left:880px;top:1374px;width:146px;height:32px;background:#5b87c8"></div>
<div style="position:absolute;left:929.50px;top:1370.50px;width:200px;height:40px;line-height:40px;font-size:28px;color:#e6e6ec;white-space:nowrap;text-align:center;overflow:hidden;transform:scaleX(0.973);transform-origin:50% 0;">49%</div>
<div style="position:absolute;left:1182.00px;top:1370.50px;width:278px;height:40px;line-height:40px;font-size:28px;color:#e6e6ec;white-space:nowrap;text-align:center;overflow:hidden;transform:scaleX(0.916);transform-origin:50% 0;">561.15MB/1.12GB</div>
<div style="position:absolute;left:1468.5px;top:1370.50px;height:40px;line-height:40px;font-size:28px;color:#e6e6ec;white-space:nowrap;">127.0.0.1:/config/test/go/pkg</div>
<div style="position:absolute;left:1868.2px;top:1370.50px;height:40px;line-height:40px;font-size:28px;color:#e6e6ec;white-space:nowrap;">127.0.0.1:/config/test2/test/g...</div>
<div style="position:absolute;left:2260.00px;top:1370.50px;width:158px;height:40px;line-height:40px;font-size:28px;color:#e6e6ec;white-space:nowrap;text-align:center;overflow:hidden;transform:scaleX(0.955);transform-origin:50% 0;">21.32MB/s</div>
<div style="position:absolute;left:2420.00px;top:1370.50px;width:192px;height:40px;line-height:40px;font-size:28px;color:#e6e6ec;white-space:nowrap;text-align:center;overflow:hidden;transform:scaleX(0.959);transform-origin:50% 0;">27s</div>
<svg style="position:absolute;left:191.5px;top:1427.4px;" width="24" height="24" viewBox="0 0 24 24" fill="none" stroke="#dcdde8" stroke-width="2.2" stroke-linecap="round" stroke-linejoin="round"><path d="M3.5 7.25 L12 16.75 L20.5 7.25" stroke-width="2.2" stroke-linecap="butt" stroke-linejoin="miter"/></svg>
<svg style="position:absolute;left:228.2px;top:1424.1px;" width="32" height="28" viewBox="0 0 32 28" fill="none" stroke="#dcdde8" stroke-width="2.2" stroke-linecap="round" stroke-linejoin="round"><path d="M3 6.5 Q3 3 6.5 3 H12.8 L16.5 7.1 H25.3 Q28.8 7.1 28.8 10.6 V21.4 Q28.8 24.9 25.3 24.9 H6.5 Q3 24.9 3 21.4 Z" stroke-width="2.2"/></svg>
<div style="position:absolute;left:269px;top:1418.50px;height:40px;line-height:40px;font-size:28px;color:#e6e6ec;white-space:nowrap;">mod</div>
<div style="position:absolute;left:682.00px;top:1418.50px;width:196px;height:40px;line-height:40px;font-size:28px;color:#e6e6ec;white-space:nowrap;text-align:center;overflow:hidden;">In progress</div>
<div style="position:absolute;left:880px;top:1422px;width:299px;height:32px;background:#17293b"></div>
<div style="position:absolute;left:880px;top:1422px;width:146px;height:32px;background:#5b87c8"></div>
<div style="position:absolute;left:929.50px;top:1418.50px;width:200px;height:40px;line-height:40px;font-size:28px;color:#e6e6ec;white-space:nowrap;text-align:center;overflow:hidden;transform:scaleX(0.973);transform-origin:50% 0;">49%</div>
<div style="position:absolute;left:1182.00px;top:1418.50px;width:278px;height:40px;line-height:40px;font-size:28px;color:#e6e6ec;white-space:nowrap;text-align:center;overflow:hidden;transform:scaleX(0.916);transform-origin:50% 0;">561.15MB/1.12GB</div>
<div style="position:absolute;left:1468.5px;top:1418.50px;height:40px;line-height:40px;font-size:28px;color:#e6e6ec;white-space:nowrap;">127.0.0.1:/config/test/go/pkg...</div>
<div style="position:absolute;left:1868.2px;top:1418.50px;height:40px;line-height:40px;font-size:28px;color:#e6e6ec;white-space:nowrap;">127.0.0.1:/config/test2/test/g...</div>
<div style="position:absolute;left:2260.00px;top:1418.50px;width:158px;height:40px;line-height:40px;font-size:28px;color:#e6e6ec;white-space:nowrap;text-align:center;overflow:hidden;transform:scaleX(0.955);transform-origin:50% 0;">21.32MB/s</div>
<div style="position:absolute;left:2420.00px;top:1418.50px;width:192px;height:40px;line-height:40px;font-size:28px;color:#e6e6ec;white-space:nowrap;text-align:center;overflow:hidden;transform:scaleX(0.959);transform-origin:50% 0;">27s</div>
<svg style="position:absolute;left:227.5px;top:1474.5px;" width="24" height="24" viewBox="0 0 24 24" fill="none" stroke="#dcdde8" stroke-width="2.2" stroke-linecap="round" stroke-linejoin="round"><path d="M7.25 3.5 L16.75 12 L7.25 20.5" stroke-width="2.2" stroke-linecap="butt" stroke-linejoin="miter"/></svg>
<svg style="position:absolute;left:264.2px;top:1472.1px;" width="32" height="28" viewBox="0 0 32 28" fill="none" stroke="#dcdde8" stroke-width="2.2" stroke-linecap="round" stroke-linejoin="round"><path d="M3 6.5 Q3 3 6.5 3 H12.8 L16.5 7.1 H25.3 Q28.8 7.1 28.8 10.6 V21.4 Q28.8 24.9 25.3 24.9 H6.5 Q3 24.9 3 21.4 Z" stroke-width="2.2"/></svg>
<div style="position:absolute;left:305px;top:1466.50px;height:40px;line-height:40px;font-size:28px;color:#e6e6ec;white-space:nowrap;">github.com</div>
<div style="position:absolute;left:682.00px;top:1466.50px;width:196px;height:40px;line-height:40px;font-size:28px;color:#e6e6ec;white-space:nowrap;text-align:center;overflow:hidden;">In progress</div>
<div style="position:absolute;left:880px;top:1470px;width:299px;height:32px;background:#17293b"></div>
<div style="position:absolute;left:880px;top:1470px;width:104px;height:32px;background:#5b87c8"></div>
<div style="position:absolute;left:929.50px;top:1466.50px;width:200px;height:40px;line-height:40px;font-size:28px;color:#e6e6ec;white-space:nowrap;text-align:center;overflow:hidden;transform:scaleX(0.973);transform-origin:50% 0;">35%</div>
<div style="position:absolute;left:1182.00px;top:1466.50px;width:278px;height:40px;line-height:40px;font-size:28px;color:#e6e6ec;white-space:nowrap;text-align:center;overflow:hidden;transform:scaleX(0.967);transform-origin:50% 0;">151.08MB/429.95MB</div>
<div style="position:absolute;left:1468.5px;top:1466.50px;height:40px;line-height:40px;font-size:28px;color:#e6e6ec;white-space:nowrap;">127.0.0.1:/config/test/go/pkg...</div>
<div style="position:absolute;left:1868.2px;top:1466.50px;height:40px;line-height:40px;font-size:28px;color:#e6e6ec;white-space:nowrap;">127.0.0.1:/config/test2/test/g...</div>
<div style="position:absolute;left:2260.00px;top:1466.50px;width:158px;height:40px;line-height:40px;font-size:28px;color:#e6e6ec;white-space:nowrap;text-align:center;overflow:hidden;transform:scaleX(0.955);transform-origin:50% 0;">21.32MB/s</div>
<div style="position:absolute;left:2420.00px;top:1466.50px;width:192px;height:40px;line-height:40px;font-size:28px;color:#e6e6ec;white-space:nowrap;text-align:center;overflow:hidden;transform:scaleX(0.959);transform-origin:50% 0;">13s</div>
<svg style="position:absolute;left:227.5px;top:1522.5px;" width="24" height="24" viewBox="0 0 24 24" fill="none" stroke="#dcdde8" stroke-width="2.2" stroke-linecap="round" stroke-linejoin="round"><path d="M7.25 3.5 L16.75 12 L7.25 20.5" stroke-width="2.2" stroke-linecap="butt" stroke-linejoin="miter"/></svg>
<svg style="position:absolute;left:264.2px;top:1520.1px;" width="32" height="28" viewBox="0 0 32 28" fill="none" stroke="#dcdde8" stroke-width="2.2" stroke-linecap="round" stroke-linejoin="round"><path d="M3 6.5 Q3 3 6.5 3 H12.8 L16.5 7.1 H25.3 Q28.8 7.1 28.8 10.6 V21.4 Q28.8 24.9 25.3 24.9 H6.5 Q3 24.9 3 21.4 Z" stroke-width="2.2"/></svg>
<div style="position:absolute;left:305px;top:1514.50px;height:40px;line-height:40px;font-size:28px;color:#e6e6ec;white-space:nowrap;">go.uber.org</div>
<div style="position:absolute;left:682.00px;top:1514.50px;width:196px;height:40px;line-height:40px;font-size:28px;color:#e6e6ec;white-space:nowrap;text-align:center;overflow:hidden;">Waiting</div>
<div style="position:absolute;left:880px;top:1518px;width:299px;height:32px;background:#17293b"></div>
<div style="position:absolute;left:929.50px;top:1514.50px;width:200px;height:40px;line-height:40px;font-size:28px;color:#e6e6ec;white-space:nowrap;text-align:center;overflow:hidden;transform:scaleX(0.98);transform-origin:50% 0;">0%</div>
<div style="position:absolute;left:1182.00px;top:1514.50px;width:278px;height:40px;line-height:40px;font-size:28px;color:#e6e6ec;white-space:nowrap;text-align:center;overflow:hidden;transform:scaleX(0.982);transform-origin:50% 0;">330.42KB</div>
<div style="position:absolute;left:1468.5px;top:1514.50px;height:40px;line-height:40px;font-size:28px;color:#e6e6ec;white-space:nowrap;">127.0.0.1:/config/test/go/pkg...</div>
<div style="position:absolute;left:1868.2px;top:1514.50px;height:40px;line-height:40px;font-size:28px;color:#e6e6ec;white-space:nowrap;">127.0.0.1:/config/test2/test/g...</div>
<div style="position:absolute;left:2260.00px;top:1514.50px;width:158px;height:40px;line-height:40px;font-size:28px;color:#e6e6ec;white-space:nowrap;text-align:center;overflow:hidden;transform:scaleX(1.25);transform-origin:50% 0;">-</div>
<div style="position:absolute;left:2420.00px;top:1514.50px;width:192px;height:40px;line-height:40px;font-size:28px;color:#e6e6ec;white-space:nowrap;text-align:center;overflow:hidden;transform:scaleX(1.25);transform-origin:50% 0;">-</div>
<svg style="position:absolute;left:227.5px;top:1570.5px;" width="24" height="24" viewBox="0 0 24 24" fill="none" stroke="#dcdde8" stroke-width="2.2" stroke-linecap="round" stroke-linejoin="round"><path d="M7.25 3.5 L16.75 12 L7.25 20.5" stroke-width="2.2" stroke-linecap="butt" stroke-linejoin="miter"/></svg>
<svg style="position:absolute;left:264.2px;top:1568.1px;" width="32" height="28" viewBox="0 0 32 28" fill="none" stroke="#dcdde8" stroke-width="2.2" stroke-linecap="round" stroke-linejoin="round"><path d="M3 6.5 Q3 3 6.5 3 H12.8 L16.5 7.1 H25.3 Q28.8 7.1 28.8 10.6 V21.4 Q28.8 24.9 25.3 24.9 H6.5 Q3 24.9 3 21.4 Z" stroke-width="2.2"/></svg>
<div style="position:absolute;left:305px;top:1562.50px;height:40px;line-height:40px;font-size:28px;color:#e6e6ec;white-space:nowrap;">google.golang.org</div>
<div style="position:absolute;left:682.00px;top:1562.50px;width:196px;height:40px;line-height:40px;font-size:28px;color:#e6e6ec;white-space:nowrap;text-align:center;overflow:hidden;">Waiting</div>
<div style="position:absolute;left:880px;top:1566px;width:299px;height:32px;background:#17293b"></div>
<div style="position:absolute;left:929.50px;top:1562.50px;width:200px;height:40px;line-height:40px;font-size:28px;color:#e6e6ec;white-space:nowrap;text-align:center;overflow:hidden;transform:scaleX(0.98);transform-origin:50% 0;">0%</div>
<div style="position:absolute;left:1182.00px;top:1562.50px;width:278px;height:40px;line-height:40px;font-size:28px;color:#e6e6ec;white-space:nowrap;text-align:center;overflow:hidden;transform:scaleX(0.92);transform-origin:50% 0;">21.41MB</div>
<div style="position:absolute;left:1468.5px;top:1562.50px;height:40px;line-height:40px;font-size:28px;color:#e6e6ec;white-space:nowrap;">127.0.0.1:/config/test/go/pkg...</div>
<div style="position:absolute;left:1868.2px;top:1562.50px;height:40px;line-height:40px;font-size:28px;color:#e6e6ec;white-space:nowrap;">127.0.0.1:/config/test2/test/g...</div>
<div style="position:absolute;left:2260.00px;top:1562.50px;width:158px;height:40px;line-height:40px;font-size:28px;color:#e6e6ec;white-space:nowrap;text-align:center;overflow:hidden;transform:scaleX(1.25);transform-origin:50% 0;">-</div>
<div style="position:absolute;left:2420.00px;top:1562.50px;width:192px;height:40px;line-height:40px;font-size:28px;color:#e6e6ec;white-space:nowrap;text-align:center;overflow:hidden;transform:scaleX(1.25);transform-origin:50% 0;">-</div>
<svg style="position:absolute;left:227.5px;top:1618.5px;" width="24" height="24" viewBox="0 0 24 24" fill="none" stroke="#dcdde8" stroke-width="2.2" stroke-linecap="round" stroke-linejoin="round"><path d="M7.25 3.5 L16.75 12 L7.25 20.5" stroke-width="2.2" stroke-linecap="butt" stroke-linejoin="miter"/></svg>
<svg style="position:absolute;left:264.2px;top:1616.1px;" width="32" height="28" viewBox="0 0 32 28" fill="none" stroke="#dcdde8" stroke-width="2.2" stroke-linecap="round" stroke-linejoin="round"><path d="M3 6.5 Q3 3 6.5 3 H12.8 L16.5 7.1 H25.3 Q28.8 7.1 28.8 10.6 V21.4 Q28.8 24.9 25.3 24.9 H6.5 Q3 24.9 3 21.4 Z" stroke-width="2.2"/></svg>
<div style="position:absolute;left:305px;top:1610.50px;height:40px;line-height:40px;font-size:28px;color:#e6e6ec;white-space:nowrap;">gopkg.in</div>
<div style="position:absolute;left:682.00px;top:1610.50px;width:196px;height:40px;line-height:40px;font-size:28px;color:#e6e6ec;white-space:nowrap;text-align:center;overflow:hidden;">Waiting</div>
<div style="position:absolute;left:880px;top:1614px;width:299px;height:32px;background:#17293b"></div>
<div style="position:absolute;left:929.50px;top:1610.50px;width:200px;height:40px;line-height:40px;font-size:28px;color:#e6e6ec;white-space:nowrap;text-align:center;overflow:hidden;transform:scaleX(0.98);transform-origin:50% 0;">0%</div>
<div style="position:absolute;left:1182.00px;top:1610.50px;width:278px;height:40px;line-height:40px;font-size:28px;color:#e6e6ec;white-space:nowrap;text-align:center;overflow:hidden;transform:scaleX(0.982);transform-origin:50% 0;">552.38KB</div>
<div style="position:absolute;left:1468.5px;top:1610.50px;height:40px;line-height:40px;font-size:28px;color:#e6e6ec;white-space:nowrap;">127.0.0.1:/config/test/go/pkg...</div>
<div style="position:absolute;left:1868.2px;top:1610.50px;height:40px;line-height:40px;font-size:28px;color:#e6e6ec;white-space:nowrap;">127.0.0.1:/config/test2/test/g...</div>
<div style="position:absolute;left:2260.00px;top:1610.50px;width:158px;height:40px;line-height:40px;font-size:28px;color:#e6e6ec;white-space:nowrap;text-align:center;overflow:hidden;transform:scaleX(1.25);transform-origin:50% 0;">-</div>
<div style="position:absolute;left:2420.00px;top:1610.50px;width:192px;height:40px;line-height:40px;font-size:28px;color:#e6e6ec;white-space:nowrap;text-align:center;overflow:hidden;transform:scaleX(1.25);transform-origin:50% 0;">-</div>
<svg style="position:absolute;left:227.5px;top:1666.5px;" width="24" height="24" viewBox="0 0 24 24" fill="none" stroke="#dcdde8" stroke-width="2.2" stroke-linecap="round" stroke-linejoin="round"><path d="M7.25 3.5 L16.75 12 L7.25 20.5" stroke-width="2.2" stroke-linecap="butt" stroke-linejoin="miter"/></svg>
<svg style="position:absolute;left:264.2px;top:1664.1px;" width="32" height="28" viewBox="0 0 32 28" fill="none" stroke="#dcdde8" stroke-width="2.2" stroke-linecap="round" stroke-linejoin="round"><path d="M3 6.5 Q3 3 6.5 3 H12.8 L16.5 7.1 H25.3 Q28.8 7.1 28.8 10.6 V21.4 Q28.8 24.9 25.3 24.9 H6.5 Q3 24.9 3 21.4 Z" stroke-width="2.2"/></svg>
<div style="position:absolute;left:305px;top:1658.50px;height:40px;line-height:40px;font-size:28px;color:#e6e6ec;white-space:nowrap;">cache</div>
<div style="position:absolute;left:682.00px;top:1658.50px;width:196px;height:40px;line-height:40px;font-size:28px;color:#e6e6ec;white-space:nowrap;text-align:center;overflow:hidden;">Waiting</div>
<div style="position:absolute;left:880px;top:1662px;width:299px;height:32px;background:#17293b"></div>
<div style="position:absolute;left:929.50px;top:1658.50px;width:200px;height:40px;line-height:40px;font-size:28px;color:#e6e6ec;white-space:nowrap;text-align:center;overflow:hidden;transform:scaleX(0.98);transform-origin:50% 0;">0%</div>
<div style="position:absolute;left:1182.00px;top:1658.50px;width:278px;height:40px;line-height:40px;font-size:28px;color:#e6e6ec;white-space:nowrap;text-align:center;overflow:hidden;transform:scaleX(0.95);transform-origin:50% 0;">323.12MB</div>
<div style="position:absolute;left:1468.5px;top:1658.50px;height:40px;line-height:40px;font-size:28px;color:#e6e6ec;white-space:nowrap;">127.0.0.1:/config/test/go/pkg...</div>
<div style="position:absolute;left:1868.2px;top:1658.50px;height:40px;line-height:40px;font-size:28px;color:#e6e6ec;white-space:nowrap;">127.0.0.1:/config/test2/test/g...</div>
<div style="position:absolute;left:2260.00px;top:1658.50px;width:158px;height:40px;line-height:40px;font-size:28px;color:#e6e6ec;white-space:nowrap;text-align:center;overflow:hidden;transform:scaleX(1.25);transform-origin:50% 0;">-</div>
<div style="position:absolute;left:2420.00px;top:1658.50px;width:192px;height:40px;line-height:40px;font-size:28px;color:#e6e6ec;white-space:nowrap;text-align:center;overflow:hidden;transform:scaleX(1.25);transform-origin:50% 0;">-</div>
<div style="position:absolute;left:2624px;top:1224px;width:12px;height:416px;border-radius:6px;background:#36375c"></div>
</div></div>
<div style="position:absolute;left:80px;top:74px;width:2560px;height:1600px;border-radius:20px;box-sizing:border-box;border:2px solid rgba(110,114,130,0.25);border-bottom-color:rgba(110,114,130,0.15);border-top-color:rgba(170,174,186,0.85);pointer-events:none;"></div>
<div style="position:absolute;left:426px;top:74px;width:174px;height:2px;background:#a9c3ea;border-radius:2px 2px 0 0"></div>
</body></html>
